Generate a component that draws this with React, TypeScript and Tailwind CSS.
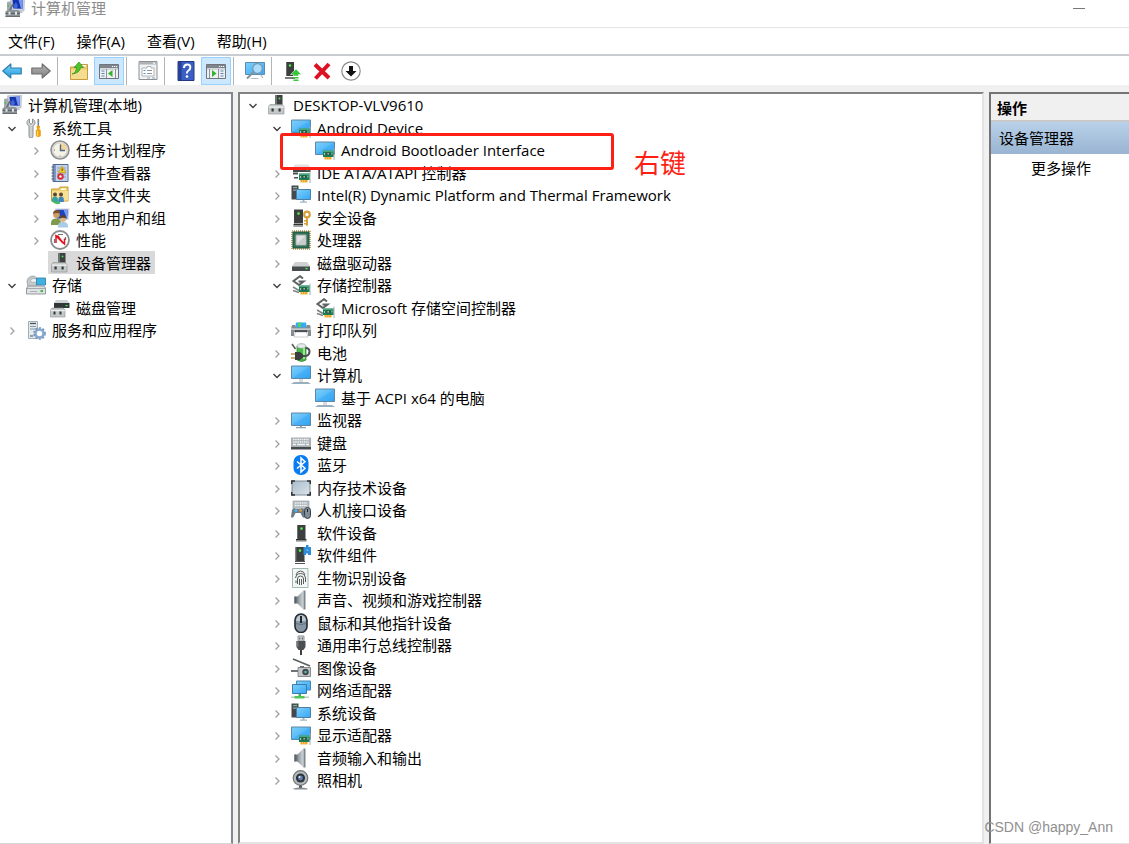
import { useState } from 'react';
import type { ReactNode } from 'react';
import { clsx } from 'clsx';

type Node = {
  label: string;
  icon: string;
  depth: 0 | 1 | 2;
  state?: 'open' | 'closed';
  marked?: boolean;
};

const consoleNodes: Node[] = [
  { label: '计算机管理(本地)', icon: 'console', depth: 0 },
  { label: '系统工具', icon: 'tools', depth: 0, state: 'open' },
  { label: '任务计划程序', icon: 'clock', depth: 1, state: 'closed' },
  { label: '事件查看器', icon: 'events', depth: 1, state: 'closed' },
  { label: '共享文件夹', icon: 'shared', depth: 1, state: 'closed' },
  { label: '本地用户和组', icon: 'users', depth: 1, state: 'closed' },
  { label: '性能', icon: 'perf', depth: 1, state: 'closed' },
  { label: '设备管理器', icon: 'host', depth: 1 },
  { label: '存储', icon: 'storage', depth: 0, state: 'open' },
  { label: '磁盘管理', icon: 'diskMgmt', depth: 1 },
  { label: '服务和应用程序', icon: 'services', depth: 0, state: 'closed' },
];

const deviceNodes: Node[] = [
  { label: 'DESKTOP-VLV9610', icon: 'host', depth: 0, state: 'open' },
  { label: 'Android Device', icon: 'display', depth: 1, state: 'open' },
  { label: 'Android Bootloader Interface', icon: 'display', depth: 2, marked: true },
  { label: 'IDE ATA/ATAPI 控制器', icon: 'ide', depth: 1, state: 'closed' },
  { label: 'Intel(R) Dynamic Platform and Thermal Framework', icon: 'system', depth: 1, state: 'closed' },
  { label: '安全设备', icon: 'security', depth: 1, state: 'closed' },
  { label: '处理器', icon: 'cpu', depth: 1, state: 'closed' },
  { label: '磁盘驱动器', icon: 'disk', depth: 1, state: 'closed' },
  { label: '存储控制器', icon: 'storageCtl', depth: 1, state: 'open' },
  { label: 'Microsoft 存储空间控制器', icon: 'storageCtl', depth: 2 },
  { label: '打印队列', icon: 'printer', depth: 1, state: 'closed' },
  { label: '电池', icon: 'battery', depth: 1, state: 'closed' },
  { label: '计算机', icon: 'computer', depth: 1, state: 'open' },
  { label: '基于 ACPI x64 的电脑', icon: 'computer', depth: 2 },
  { label: '监视器', icon: 'monitor', depth: 1, state: 'closed' },
  { label: '键盘', icon: 'keyboard', depth: 1, state: 'closed' },
  { label: '蓝牙', icon: 'bluetooth', depth: 1, state: 'closed' },
  { label: '内存技术设备', icon: 'memory', depth: 1, state: 'closed' },
  { label: '人机接口设备', icon: 'hid', depth: 1, state: 'closed' },
  { label: '软件设备', icon: 'software', depth: 1, state: 'closed' },
  { label: '软件组件', icon: 'component', depth: 1, state: 'closed' },
  { label: '生物识别设备', icon: 'biometric', depth: 1, state: 'closed' },
  { label: '声音、视频和游戏控制器', icon: 'speaker', depth: 1, state: 'closed' },
  { label: '鼠标和其他指针设备', icon: 'mouse', depth: 1, state: 'closed' },
  { label: '通用串行总线控制器', icon: 'usb', depth: 1, state: 'closed' },
  { label: '图像设备', icon: 'imaging', depth: 1, state: 'closed' },
  { label: '网络适配器', icon: 'network', depth: 1, state: 'closed' },
  { label: '系统设备', icon: 'system', depth: 1, state: 'closed' },
  { label: '显示适配器', icon: 'display', depth: 1, state: 'closed' },
  { label: '音频输入和输出', icon: 'speaker', depth: 1, state: 'closed' },
  { label: '照相机', icon: 'camera', depth: 1, state: 'closed' },
];

const menus = ['文件(F)', '操作(A)', '查看(V)', '帮助(H)'];

const indent = ['pl-0', 'pl-6', 'pl-12'];

const card = (
  <>
    <path d="M18.5 8.5h1V20h-1z" fill="#a9b0b4" />
    <path d="M8 10.5h10.5v6.5H8z" fill="#1f7d55" />
    <path d="M8 10.5h10.5v1.2H8z" fill="#5cb690" />
    <path d="M11 12.3h4.6v3.2H11z" fill="#2b5a47" />
    <path d="M12.4 13h1.6v1.6h-1.6z" fill="#9dbfae" />
    <path d="M16.4 12.4h1v2h-1zM9 13h1v2H9z" fill="#8fd0b0" />
    <path d="M9.5 17h7v2.400h-7z" fill="#f0a21c" />
    <path d="M11.3 17h.6v2.4h-.6zM13.6 17h.6v2.4h-.6z" fill="#fbd98a" />
  </>
);

const paneWindow = (
  <>
    <path d="M.5 3.5h19v14H.5z" fill="#eef0f2" stroke="#6f757b" />
    <path d="M1 4h18v3H1z" fill="#7e858c" />
    <path d="M13 5h1.200v1H13zM15 5h1.200v1H15zM17 5h1.200v1H17z" fill="#fff" />
    <path d="M1 8h18" stroke="#b7bec4" />
  </>
);

const icons: Record<string, ReactNode> = {
  console: (
    <>
      <path d="M2 4l5-1v9H2z" fill="#a4abaf" />
      <path d="M2.500 7H4v1.500H2.500z" fill="#35c64b" />
      <path d="M5.500.8L19.500.3 19 13l-12-.8z" fill="#cdd3e0" stroke="#a4acbd" strokeWidth=".6" />
      <path d="M7.500 2L18 1.600l-.4 9.200-9.300-.4z" fill="#1532ae" />
      <path d="M13.500 1.800L18 1.600l-.4 9.200-1.600-.1z" fill="#7796ee" />
      <path d="M9 7l2-3 2 4-1 2H8.500z" fill="#3f66dd" />
      <path d="M7 6L4 12h2l3-6z" fill="#6d7477" />
      <path d="M12 13h5l1 2h-5z" fill="#c0c6cc" />
      <path d="M.5 13.500l2-1.500H13l2 1.500V19H.5z" fill="#8b9295" />
      <path d="M.5 14.800H15v1H.5z" fill="#545c60" />
      <path d="M3.500 13.800h2v3h-2zM10 13.800h2v3h-2z" fill="#dfe4e6" />
      <path d="M.5 18H15v1H.5z" fill="#666e72" />
    </>
  ),
  tools: (
    <>
      <path d="M3.500 1v4l1.500 1.200L6.500 5V1C8.200 1.800 9 3 9 4.800c0 1.500-.8 2.600-2 3.300V18a2 2 0 0 1-4 0V8.100C1.800 7.400 1 6.300 1 4.800 1 3 1.800 1.800 3.500 1z" fill="#cfd1d2" stroke="#85898b" strokeWidth=".9" />
      <path d="M11.500 1h1.600v7h-1.600z" fill="#7d8386" />
      <path d="M10.300 8h4l-1 3.200 1.500 1V18q-2.500 2-5 0v-5.800l1.500-1z" fill="#eea012" />
      <path d="M11 13h1.200v5H11z" fill="#ffd86a" />
    </>
  ),
  clock: (
    <>
      <circle cx="10" cy="10" r="9" fill="#e8e8e5" stroke="#8d8f90" strokeWidth="1.600" />
      <circle cx="10" cy="10" r="7.200" fill="#f5f2e6" stroke="#c4c4be" strokeWidth=".8" />
      <path d="M10 10V3a7 7 0 0 1 7 7z" fill="#f7d69b" />
      <path d="M10.500 4.500v6H15" fill="none" stroke="#4e6989" strokeWidth="1.400" />
      <path d="M4 10h1M9.500 16h1" stroke="#77797a" />
    </>
  ),
  events: (
    <>
      <path d="M3 1.500h15v17H3z" fill="#7f9ac8" stroke="#50678f" />
      <path d="M6 2h11.500v16H6z" fill="#c2d2ec" />
      <path d="M7 5h9M7 8h9M7 11h9M7 14h9" stroke="#7890ba" strokeWidth=".7" />
      <path d="M1.500 4h3M1.500 7h3M1.500 10h3M1.500 13h3M1.500 16h3" stroke="#59606b" />
      <path d="M12 3l4 6.500H8.500z" fill="#f6cf25" stroke="#b8900a" strokeWidth=".6" />
      <path d="M11.700 5.500h1V8h-1z" fill="#4c3d00" />
      <circle cx="10.500" cy="13.500" r="3.200" fill="#d92b35" />
      <circle cx="10.500" cy="13.500" r="1.200" fill="#fff" />
    </>
  ),
  shared: (
    <>
      <path d="M1.500 4h7L10 2h8v14H1.500z" fill="#f1cf68" stroke="#c69a34" />
      <path d="M11 3.500h5V5h-5z" fill="#fff" />
      <path d="M2 6h16v9.500H2z" fill="#f8df91" />
      <circle cx="5" cy="9.500" r="2" fill="#5b4734" />
      <circle cx="11" cy="9.500" r="2" fill="#5b4734" />
      <path d="M2 15q0-3.500 3-3.500T8 15v2H2z" fill="#35a2a5" />
      <path d="M8.300 15q0-3.500 2.800-3.500t2.800 3.500v2H8.300z" fill="#3d86bd" />
      <path d="M2.500 15.500q3 4 7.500 2" fill="none" stroke="#42b95b" strokeWidth="2" />
    </>
  ),
  users: (
    <>
      <path d="M5 .5h14.500l-1 11.500H6z" fill="#c9d0df" />
      <path d="M6.500 1.700h11.300L17 10.500H7z" fill="#1c42c0" />
      <path d="M13.500 1.700h4.300L17 10.500z" fill="#7b9cec" />
      <circle cx="6.500" cy="6.800" r="3.300" fill="#cf9c64" />
      <path d="M3 6q0-4 4-4t3 3.500q-4-1-7 .5z" fill="#7a5130" />
      <path d="M1 15q0-4.500 5-4.500T11 15v2H1z" fill="#7f9a4d" />
      <circle cx="13" cy="11" r="3" fill="#dcb487" />
      <path d="M10 10.500q0-3.500 3-3.500t3 3.500q-3-1.500-6 0z" fill="#5d412b" />
      <path d="M8 18q0-4 5-4t5 4v1.500H8z" fill="#a8cbe8" />
    </>
  ),
  perf: (
    <>
      <circle cx="10" cy="10" r="9" fill="#fff" stroke="#8a8d90" strokeWidth="1.800" />
      <path d="M4.500 13V9M15.500 10V7M8 4.500h5" stroke="#6c7073" strokeWidth="1.200" />
      <path d="M6 13V6l8.500 8V8.500" fill="none" stroke="#e3161e" strokeWidth="1.500" />
      <path d="M5 5l3.500.5 6.500 9-3-1.500z" fill="#e3161e" />
    </>
  ),
  host: (
    <>
      <path d="M8 0h7.500v10H8z" fill="#3d4040" />
      <path d="M8 0h2v10H8z" fill="#707475" />
      <circle cx="12.500" cy="3.500" r="1" fill="#4be253" />
      <path d="M3 9.500h12l2 2V19H1.500v-7.500z" fill="#c6c9ca" stroke="#8b8f90" strokeWidth=".6" />
      <path d="M1.800 11.500h15v1.300h-15z" fill="#eef0f0" />
      <path d="M4.500 13.500h2.200v3H4.500zM11.500 13.500h2.200v3h-2.200z" fill="#33383a" />
    </>
  ),
  storage: (
    <>
      <path d="M1 6q1-5 7-5l4 3-2 8-8 1z" fill="#c3c9cd" stroke="#8c9397" strokeWidth=".7" />
      <ellipse cx="8" cy="5.500" rx="3.500" ry="2" fill="#eef1f2" stroke="#91989c" strokeWidth=".6" />
      <path d="M10.500 3h9v7h-9z" fill="#3fb1e3" stroke="#2d7da5" strokeWidth=".8" />
      <path d="M.5 13l2-2H18l1.500 2v6H.5z" fill="#dfe2e3" stroke="#7d8487" strokeWidth=".8" />
      <path d="M1 13.500h18.500" stroke="#a2a8ab" />
      <path d="M14.500 15h2.500v2h-2.500z" fill="#3bbb46" />
      <path d="M4 16.500h7" stroke="#aab0b3" />
    </>
  ),
  diskMgmt: (
    <>
      <path d="M6 2h11l2.500 3H4z" fill="#cdd1d3" />
      <path d="M4 5h15.500v5H4z" fill="#313637" />
      <path d="M15.500 7h2.200v1.200h-2.200z" fill="#42e357" />
      <path d="M2 10h11l2 2v7H.5v-7z" fill="#c6c9ca" stroke="#8b8f90" strokeWidth=".6" />
      <path d="M.8 12h14v1.200H.8z" fill="#eef0f0" />
      <path d="M3.500 13.500h2v3h-2zM9.500 13.500h2v3h-2z" fill="#33383a" />
    </>
  ),
  services: (
    <>
      <path d="M2.500 1.500h9v17h-9z" fill="#e4e9ec" stroke="#a2afb8" />
      <path d="M4 3.500h6" stroke="#46545e" strokeWidth="1.300" />
      <path d="M4 6.500h6M4 9h6" stroke="#8698a4" />
      <path d="M4 15h3v2H4z" fill="#8f9da6" />
      <circle cx="13.500" cy="13.500" r="4" fill="#fff" stroke="#88a9cf" strokeWidth="2.600" />
      <circle cx="13.500" cy="13.500" r="5.600" fill="none" stroke="#6e92bd" strokeWidth="1.500" strokeDasharray="2 1.600" />
    </>
  ),
  display: (
    <>
      <path d="M.5 2h19v12.500H.5z" fill="url(#glass)" stroke="#5f87a5" />
      <path d="M1 14L19 2.500V14z" fill="#1b94ee" opacity=".25" />
      {card}
    </>
  ),
  ide: (
    <>
      <path d="M4 1.500h13l2.500 3H2z" fill="#dfe1e2" />
      <path d="M2 4.500h17.500V9H2z" fill="#43484a" />
      <path d="M15.500 6h2v1.500h-2z" fill="#43e058" />
      {card}
      <path d="M2 9.500h5v2H2zM3 14h4v1.500H3z" fill="#4b5052" />
    </>
  ),
  system: (
    <>
      <path d="M.5.5h7v14h-7z" fill="#44494f" />
      <path d="M2 2h4v1.200H2zM2 4.500h4v1.200H2z" fill="#9aa0a5" />
      <path d="M4.500 1.700h1.200v1.200H4.500z" fill="#4be253" />
      <path d="M5.500 4.500h14v10h-14z" fill="url(#glass)" stroke="#4f7ea1" />
      <path d="M11.500 15h2v1.500h-2zM9 16.500h7v1.200H9z" fill="#9fb6c6" />
    </>
  ),
  security: (
    <>
      <path d="M3 1.500h9v14H3z" fill="#3d3f3f" />
      <path d="M2.500 16h9.500v1.300H2.500z" fill="#303232" />
      <path d="M2.500 17.300h9.500v1.500H2.500z" fill="#8a8c8c" />
      <circle cx="7.500" cy="5.600" r="1.300" fill="#4bf04b" />
      <circle cx="16" cy="6.500" r="2.800" fill="none" stroke="#d6a13e" strokeWidth="2.200" />
      <path d="M15 9.500h2V17l-1 1.500-1-1.500z" fill="#d6a13e" />
      <path d="M13 12h2v1.500h-2zM13 15h2v1.500h-2z" fill="#d6a13e" />
    </>
  ),
  cpu: (
    <>
      <path d="M1 1h18v18H1z" fill="none" stroke="#b78d3b" strokeWidth="1.600" strokeDasharray="1 1" />
      <path d="M2 2h16v16H2z" fill="#2e7358" stroke="#1f513d" />
      <path d="M5 5h10v10H5z" fill="#e1e3e2" stroke="#a3a9a6" />
      <path d="M5.500 14.500l9-9v9z" fill="#c8ccca" />
    </>
  ),
  disk: (
    <>
      <path d="M4 9h12l3 4H1z" fill="#cfd2d3" />
      <path d="M1 13h18v5H1z" fill="#474c4e" />
      <path d="M1 13h18v1H1z" fill="#8b9092" />
      <path d="M14.500 14.800h2v1.500h-2z" fill="#48ea5c" />
    </>
  ),
  storageCtl: (
    <>
      <path d="M12 3.500L9 1.200 2.500 6 8 10l4.500-3.500H7.500" fill="none" stroke="#5d6163" strokeWidth="2" />
      <path d="M2 12l6 3.500M2 15.500l6 2" stroke="#7d8284" strokeWidth="1.500" />
      {card}
    </>
  ),
  printer: (
    <>
      <path d="M5 2.500h10l1 5.500H4z" fill="#35abf3" />
      <path d="M7 2.500h3V7H7z" fill="#54cf61" />
      <path d="M1 5h3l1 2.500h10L16 5h3l1 4v7h-3v-4H3v4H0V9z" fill="#858b90" />
      <path d="M0 8.500h20v1.200H0z" fill="#dfe2e4" />
      <path d="M4 10.500h12v2H4z" fill="#222729" />
      <path d="M4.500 12h11l1.500 5H3z" fill="#fff" stroke="#a8adb0" strokeWidth=".6" />
    </>
  ),
  battery: (
    <>
      <path d="M6 3q4.500-4 9 0v14q-4.500 3-9 0z" fill="#49b84a" stroke="#2b7730" strokeWidth=".7" />
      <ellipse cx="10.500" cy="3" rx="4.400" ry="2.200" fill="#e6eaea" stroke="#9ba2a4" strokeWidth=".6" />
      <path d="M12 5h2v11h-2z" fill="#9be58f" />
      <path d="M1 1l3.500 5" stroke="#5a5e5f" strokeWidth="1.600" />
      <path d="M0 11h5M0 15h5" stroke="#c19a45" strokeWidth="1.500" />
      <path d="M4 9h5l3 2.500v3L9 17H4z" fill="#3a3e40" />
      <path d="M12 13h3q3.500-1 3.500-4.500T14.500 5" fill="none" stroke="#4c5152" strokeWidth="2" />
    </>
  ),
  computer: (
    <>
      <path d="M.5 1h19v12.500H.5z" fill="url(#glass)" stroke="#5f87a5" />
      <path d="M1 13L19 1.500V13z" fill="#1b94ee" opacity=".25" />
      <path d="M8 14h4v3H8z" fill="#d5dde3" />
      <path d="M3 17h14l3 2H0z" fill="#9aafbd" />
    </>
  ),
  monitor: (
    <>
      <path d="M.5 3h19v12.500H.5z" fill="url(#glass)" stroke="#5f87a5" />
      <path d="M1 15L19 3.500V15z" fill="#1b94ee" opacity=".25" />
      <path d="M9 16h2v1H9zM5 17h10v1.200H5z" fill="#8ba2b2" />
    </>
  ),
  keyboard: (
    <>
      <path d="M0 4.500h20V14H0z" fill="#a9b0b5" />
      <path d="M0 14h20v2.500H0z" fill="#43494d" />
      <path d="M2 6.500h16M2 9h16" stroke="#f4f5f6" strokeWidth="1.400" strokeDasharray="1.500 .7" />
      <path d="M2 11.500h3M6 11.500h8M15 11.500h3" stroke="#f4f5f6" strokeWidth="1.400" />
    </>
  ),
  bluetooth: (
    <>
      <rect x="2.500" y="0" width="15" height="20" rx="7" fill="#0a7cf2" />
      <path d="M6 6.500l8 6.800-4 3.700V3l4 3.700-8 6.800" fill="none" stroke="#fff" strokeWidth="1.500" />
    </>
  ),
  memory: (
    <>
      <path d="M1 3h18v14H1z" fill="url(#silver)" stroke="#7c8b95" />
      <path d="M.7 6V3H4M16 3h3.300v3M19.300 14v3H16M4 17H.7v-3" fill="none" stroke="#2d3235" strokeWidth="1.500" />
    </>
  ),
  hid: (
    <>
      <path d="M2 1h16v9H2z" fill="#b9c0c5" stroke="#8c949a" strokeWidth=".6" />
      <path d="M4 3h12M4 5.500h12" stroke="#fff" strokeWidth="1.200" strokeDasharray="1.500 .8" />
      <path d="M0 17l1-7q2-3 4-1h4q3-2 4 1l1 7q-2 2-3.500-2l-1-2h-5l-1 2Q2 19 0 17z" fill="#6d7a87" />
      <circle cx="5" cy="10.500" r="1.500" fill="#47b3f0" />
      <circle cx="9.500" cy="10.500" r="1.200" fill="#f29e28" />
      <rect x="13.500" y="7.500" width="6" height="11" rx="3" fill="#7f8d99" stroke="#333c44" />
      <path d="M16.500 9v3" stroke="#222" />
    </>
  ),
  software: (
    <>
      <path d="M6 2h8.500v14H6z" fill="#3d3f3f" />
      <path d="M6 2h1v14H6z" fill="#6d7070" />
      <path d="M5 17h10.500v1.600H5z" fill="#8a8c8c" />
      <path d="M5 16h10.500v1H5z" fill="#303232" />
      <circle cx="10.500" cy="5.600" r="1.300" fill="#4bf04b" />
    </>
  ),
  component: (
    <>
      <path d="M4.500 2h9v14h-9z" fill="#3d3f3f" />
      <path d="M4.500 2h1v14h-1z" fill="#6d7070" />
      <path d="M4 16h10v1H4zM4 18h10v1H4z" fill="#555858" />
      <circle cx="9" cy="5.600" r="1.300" fill="#4bf04b" />
      <path d="M12.500 2H15V0h2.500v2H20v8h-3V8.500h-2V10h-2.500z" fill="#2e8fd8" />
      <path d="M15.500 4.500h2v1.500h-2z" fill="#6db8ee" />
    </>
  ),
  biometric: (
    <>
      <path d="M1.500.5H17v19H1.500z" fill="#f2f7f5" stroke="#9fb9b0" />
      <path d="M5 7q1-4 4.500-4T14 7M4.500 10q1-4.500 5-4.500T14.500 10v4M6.500 16v-5q0-3 3-3t3 3v5M8.500 17v-6M10.500 17v-6M5 15v-2.500" fill="none" stroke="#565a59" />
    </>
  ),
  speaker: (
    <>
      <path d="M3.500 6.500H8v7H3.500z" fill="#6b7379" />
      <path d="M6.500 6.500L12.500.5v19l-6-6z" fill="url(#metal)" />
      <path d="M12.500.5h2v19h-2z" fill="#7d868c" />
      <path d="M3.500 6.500h1v7h-1z" fill="#4e555a" />
    </>
  ),
  mouse: (
    <>
      <rect x="4" y="1" width="12" height="18.500" rx="6" fill="#8796a4" stroke="#252b30" strokeWidth="1.600" />
      <path d="M5 8q1-6 5-6t5 6z" fill="#bec8d0" />
      <path d="M10 3v7" stroke="#20262b" strokeWidth="2" />
      <path d="M5 10.500q5 2 10 0" fill="none" stroke="#5b6975" strokeWidth=".8" />
    </>
  ),
  usb: (
    <>
      <path d="M7 1h6v5H7z" fill="#d5d8d9" stroke="#7b8082" strokeWidth=".8" />
      <path d="M8.300 2.500h1v2h-1zM10.800 2.500h1v2h-1z" fill="#45494b" />
      <path d="M5.500 6h9v6l-2 3h-5l-2-3z" fill="#4a4e50" />
      <path d="M5.500 6h2v6h-2z" fill="#74797b" />
      <path d="M9 15h2v5H9z" fill="#3b3f41" />
    </>
  ),
  imaging: (
    <>
      <path d="M2 1l17 7" stroke="#5c6062" strokeWidth="1.800" />
      <path d="M0 13h8" stroke="#6e7375" strokeWidth="2" />
      <path d="M7 9.500h12.500v9H7z" fill="#c3c7c8" stroke="#717678" strokeWidth=".8" />
      <path d="M9 8h4v1.500H9z" fill="#65696b" />
      <circle cx="14.500" cy="14" r="3.200" fill="#41474a" />
      <circle cx="14.500" cy="14" r="1.300" fill="#5eb2b4" />
    </>
  ),
  network: (
    <>
      <path d="M5.500 1h14v9h-14z" fill="url(#glass)" stroke="#4284b5" />
      <path d="M1.500 4.500h14v9h-14z" fill="url(#glass)" stroke="#3a7cae" />
      <path d="M7.500 14h2.500v3H7.500z" fill="#45b54b" />
      <path d="M0 16.500h18v1.500H0z" fill="#c2c7ca" />
      <path d="M3.500 16h10v2.500h-10z" fill="#4fc755" />
    </>
  ),
  camera: (
    <>
      <circle cx="9.500" cy="8" r="7.300" fill="#b6babc" stroke="#6f7476" strokeWidth="1.200" />
      <circle cx="9.500" cy="8" r="4.600" fill="#2e3437" />
      <circle cx="9.500" cy="8" r="2.400" fill="#5d7eb4" />
      <circle cx="8.500" cy="7" r="1" fill="#dce7f7" />
      <path d="M8 15.500h3V18H8z" fill="#54595b" />
      <path d="M2.500 18.500q7-2 14 0v1h-14z" fill="#878c8e" />
    </>
  ),
  back: <path d="M.8 10l8-7v4h10.400v6H8.800v4z" fill="url(#arrowBlue)" stroke="#2f7fae" strokeWidth="1.200" strokeLinejoin="round" />,
  forward: <path d="M19.200 10l-8-7v4H.8v6h10.400v4z" fill="url(#arrowGray)" stroke="#6f6f6f" strokeWidth="1.200" strokeLinejoin="round" />,
  folderUp: (
    <>
      <path d="M1.500 6h8l2-2.500h7v15h-17z" fill="#eac96a" stroke="#c79b3f" />
      <path d="M2 8.500h16V18H2z" fill="#f5dc8f" />
      <path d="M13 4h4v1.500h-4z" fill="#fff" />
      <path d="M3 13q4-1 4.500-6.500H5L10 1l4.500 5.500h-3Q11 12 3 13z" fill="#4fc32c" stroke="#33911b" strokeWidth=".7" />
    </>
  ),
  paneLeft: (
    <>
      {paneWindow}
      <path d="M2.500 10h3M2.500 12.500h3M2.500 15h3" stroke="#5d85b8" />
      <path d="M7.500 8v9M16.500 8v9" stroke="#8b949c" />
      <path d="M13.500 9v7L9 12.500z" fill="#35b22e" />
    </>
  ),
  paneRight: (
    <>
      {paneWindow}
      <path d="M14.500 10h3M14.500 12.500h3M14.500 15h3" stroke="#5d85b8" />
      <path d="M12.500 8v9M3.500 8v9" stroke="#8b949c" />
      <path d="M6 9v7l4.500-3.500z" fill="#35b22e" />
    </>
  ),
  properties: (
    <>
      <path d="M1 .5h18v18H1z" fill="#f1f2f3" stroke="#8c9195" />
      <path d="M1.500 1h17v2.500h-17z" fill="#adb2b6" />
      <path d="M15 1.500h2v1.300h-2z" fill="#fff" />
      <path d="M4 7h5V5.500h4V7h3v8H4z" fill="#fff" stroke="#9ca5ac" strokeWidth=".8" />
      <path d="M5.500 9.500h2M5.500 12.500h2" stroke="#4993cf" />
      <path d="M9 9.500h5M9 12.500h5" stroke="#8e959a" />
      <path d="M9 17h3M14 17h3" stroke="#9ca1a5" />
    </>
  ),
  help: (
    <>
      <path d="M2 .5h16v19H2z" fill="#3b5fc4" stroke="#22397f" />
      <path d="M2.500 1h3v18h-3z" fill="#243f95" />
      <path d="M8 7q0-3.500 3.200-3.500T14.300 6.500q0 2-1.800 3t-1.500 3" fill="none" stroke="#fff" strokeWidth="2" />
      <circle cx="11" cy="15.500" r="1.300" fill="#fff" />
    </>
  ),
  scan: (
    <>
      <path d="M.5 1.500h19v12H.5z" fill="url(#glass)" stroke="#5b8cad" />
      <path d="M4 18q6-2 11 0z" fill="#a3b3be" />
      <path d="M9 10.500l-7 7" stroke="#84919a" strokeWidth="2" />
      <circle cx="12.500" cy="7.500" r="4.800" fill="#a9dcfa" stroke="#7698ad" strokeWidth="1.200" />
      <path d="M15 13l3 4" stroke="#8fa3b0" />
    </>
  ),
  updateDriver: (
    <>
      <path d="M3 1h8v14H3z" fill="#3d3f3f" />
      <path d="M3 1h1v14H3z" fill="#6d7070" />
      <path d="M2 16h10v2H2z" fill="#77797a" />
      <circle cx="7" cy="4.500" r="1.200" fill="#4bf04b" />
      <path d="M13 8l5.500 5.500h-3V15h-5v-1.500h-3z" fill="#37c53b" stroke="#fff" strokeWidth=".5" />
      <path d="M10.500 16h5v1.500h-5zM10.500 18.500h5V20h-5z" fill="#37c53b" />
    </>
  ),
  uninstall: <path d="M3 3.500L17 17M17 3L3.500 17.500" stroke="#df1021" strokeWidth="4" />,
  disable: (
    <>
      <circle cx="10" cy="10" r="9.200" fill="#fff" stroke="#8b8b8b" strokeWidth="1.200" />
      <path d="M8 5h4v5h3.500L10 15.500 4.500 10H8z" fill="#111" />
    </>
  ),
};

function Icon({ name }: { name: string }) {
  return (
    <svg viewBox="0 0 20 20" className="size-5 shrink-0" aria-hidden="true">
      {icons[name]}
    </svg>
  );
}

function Gradients() {
  return (
    <svg className="absolute size-0" aria-hidden="true">
      <defs>
        <linearGradient id="glass" x1="0" y1="0" x2="1" y2="1">
          <stop offset="0" stopColor="#7fd0fb" />
          <stop offset="1" stopColor="#35a7f6" />
        </linearGradient>
        <linearGradient id="metal">
          <stop offset="0" stopColor="#8a939a" />
          <stop offset="1" stopColor="#d3d8db" />
        </linearGradient>
        <linearGradient id="silver" x1="0" y1="0" x2="1" y2="1">
          <stop offset="0" stopColor="#a9bccb" />
          <stop offset="1" stopColor="#dbe4ea" />
        </linearGradient>
        <linearGradient id="arrowBlue" x1="0" y1="0" x2="0" y2="1">
          <stop offset="0" stopColor="#7fd3f7" />
          <stop offset="1" stopColor="#1f9be0" />
        </linearGradient>
        <linearGradient id="arrowGray" x1="0" y1="0" x2="0" y2="1">
          <stop offset="0" stopColor="#b5b5b5" />
          <stop offset="1" stopColor="#7f7f7f" />
        </linearGradient>
      </defs>
    </svg>
  );
}

function Chevron({ open }: { open: boolean }) {
  return (
    <svg viewBox="0 0 10 10" className="mt-0.5 size-2.5" fill="none" aria-hidden="true">
      {open ? (
        <path d="M1.500 3L5 6.500 8.500 3" stroke="#404040" strokeWidth="1.400" />
      ) : (
        <path d="M3.500 1.500L7 5 3.500 8.500" stroke="#a0a0a0" strokeWidth="1.300" />
      )}
    </svg>
  );
}

function Annotation() {
  return (
    <>
      <div className="pointer-events-none absolute -top-1.5 left-[39px] z-10 h-[37px] w-[334px] rounded-[3px] border-3 border-[#ff1f14]" />
      <span className="pointer-events-none absolute top-2 left-[393px] z-10 text-[26px] leading-8 text-[#ff1f14]">右键</span>
    </>
  );
}

type TreeProps = {
  label: string;
  nodes: Node[];
  selected: string;
  onSelect: (label: string) => void;
};

function Tree({ label, nodes, selected, onSelect }: TreeProps) {
  return (
    <ul role="tree" aria-label={label}>
      {nodes.map(node => (
        <li
          key={node.label}
          role="treeitem"
          aria-expanded={node.state ? node.state === 'open' : undefined}
          aria-selected={selected === node.label}
          className={clsx('relative flex items-stretch odd:h-[22px] even:h-[23px]', indent[node.depth])}
        >
          {node.state ? (
            <button type="button" aria-label={node.label} className="flex w-6 shrink-0 items-center justify-center">
              <Chevron open={node.state === 'open'} />
            </button>
          ) : (
            node.depth > 0 && <span className="w-6 shrink-0" />
          )}
          <button
            type="button"
            onClick={() => onSelect(node.label)}
            className={clsx(
              'flex items-center gap-1.5 pr-1 pl-0.5 whitespace-nowrap',
              selected === node.label && 'bg-[#d9d9d9]'
            )}
          >
            <Icon name={node.icon} />
            {node.label}
          </button>
          {node.marked && <Annotation />}
        </li>
      ))}
    </ul>
  );
}

function ToolButton({ icon, label, active }: { icon: string; label: string; active?: boolean }) {
  return (
    <button
      type="button"
      aria-label={label}
      className={clsx(
        'flex h-7 shrink-0 items-center justify-center',
        active ? 'w-[30px] border border-[#99d1ff] bg-[#cce8ff]' : 'w-7'
      )}
    >
      <Icon name={icon} />
    </button>
  );
}

function ToolGroup({ children }: { children: ReactNode }) {
  return <div className="flex gap-px border-l border-[#b4b4b4] pl-[7px] first:border-l-0 first:pl-0">{children}</div>;
}

export default function App() {
  const [selected, setSelected] = useState('设备管理器');
  const [device, setDevice] = useState('');

  return (
    <div className="relative flex h-screen flex-col overflow-hidden bg-[#f0f0f0] font-['Open_Sans','Noto_Sans_CJK_SC',sans-serif] text-[15px] leading-5 text-black">
      <Gradients />

      <header className="flex h-7 shrink-0 items-start justify-between border-b border-[#e5e5e5] bg-white pr-11 pl-[5px]">
        <div className="flex items-start gap-1.5">
          <div className="-mt-0.5">
            <Icon name="console" />
          </div>
          <h1 className="leading-4 text-[#8c8c8c]">计算机管理</h1>
        </div>
        <button type="button" aria-label="最小化" className="flex h-4 w-3 items-center">
          <span className="h-px w-3 bg-[#777]" />
        </button>
      </header>

      <nav className="flex h-7 shrink-0 items-center gap-[22px] border-b-2 border-[#c9ccd1] bg-white pl-2">
        {menus.map(menu => (
          <button key={menu} type="button">{menu}</button>
        ))}
      </nav>

      <div className="-ml-0.5 flex shrink-0 gap-0.5 bg-white pt-px">
        <ToolGroup>
          <ToolButton icon="back" label="后退" />
          <ToolButton icon="forward" label="前进" />
        </ToolGroup>
        <ToolGroup>
          <ToolButton icon="folderUp" label="上移一级" />
          <ToolButton icon="paneLeft" label="显示/隐藏控制台树" active />
        </ToolGroup>
        <ToolGroup>
          <ToolButton icon="properties" label="属性" />
        </ToolGroup>
        <ToolGroup>
          <ToolButton icon="help" label="帮助" />
          <ToolButton icon="paneRight" label="显示/隐藏操作窗格" active />
        </ToolGroup>
        <ToolGroup>
          <ToolButton icon="scan" label="扫描检测硬件改动" />
        </ToolGroup>
        <ToolGroup>
          <ToolButton icon="updateDriver" label="更新驱动程序" />
          <ToolButton icon="uninstall" label="卸载设备" />
          <ToolButton icon="disable" label="禁用设备" />
        </ToolGroup>
      </div>

      <main className="flex min-h-0 flex-1 gap-[5px] pt-[7px]">
        <aside className="w-[233px] shrink-0 overflow-hidden border-t-2 border-r-2 border-b border-[#828790] border-b-[#d8d8d8] bg-white">
          <Tree label="计算机管理" nodes={consoleNodes} selected={selected} onSelect={setSelected} />
        </aside>

        <section className="min-w-0 flex-1 overflow-hidden border-2 border-[#838383] border-r-[#e3e3e3] border-b-[#e3e3e3] bg-white pl-px">
          <Tree label="设备" nodes={deviceNodes} selected={device} onSelect={setDevice} />
        </section>

        <aside className="w-[140px] shrink-0 border-t-2 border-b border-l-2 border-[#737373] border-b-[#e3e3e3] bg-white">
          <h2 className="border-b-2 border-[#c8c8c8] bg-[#f0f0f0] px-1.5 pt-1 pb-0.5 font-bold">操作</h2>
          <h3 className="bg-linear-to-b from-[#b9d1ea] to-[#99b4d1] px-2 py-1.5">设备管理器</h3>
          <button type="button" className="px-10 py-1 whitespace-nowrap">更多操作</button>
        </aside>
      </main>

      <p className="pointer-events-none absolute right-4 bottom-[7px] font-['Liberation_Sans',sans-serif] text-sm text-[#8f8f8f]">
        CSDN @happy_Ann
      </p>
    </div>
  );
}
